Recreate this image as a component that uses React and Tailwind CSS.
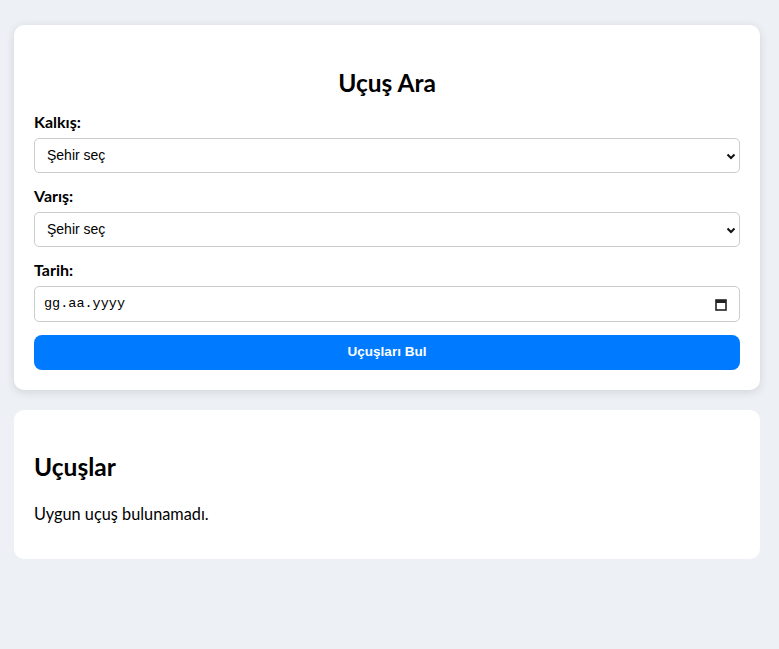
import { useState } from 'react';

const CITIES = ['İstanbul', 'Ankara', 'İzmir', 'Antalya'];

function Chevron() {
  return (
    <svg width="10" height="7" viewBox="0 0 10 7" className="absolute right-[4px] top-[15px] pointer-events-none">
      <path d="M1.5 1.5 L5 5 L8.5 1.5" fill="none" stroke="#111" strokeWidth="2" />
    </svg>
  );
}

function CitySelect({ value, onChange }) {
  return (
    <div className="relative mb-[13px]">
      <select
        value={value}
        onChange={(e) => onChange(e.target.value)}
        className="w-full h-[35px] appearance-none bg-white border border-[#cccccc] rounded-[5px] pl-[12px] text-[14px] text-black outline-none font-['Liberation_Sans',Arial,sans-serif]"
      >
        <option value="">Şehir seç</option>
        {CITIES.map((c) => (
          <option key={c} value={c}>{c}</option>
        ))}
      </select>
      <Chevron />
    </div>
  );
}

export default function App() {
  const [from, setFrom] = useState('');
  const [to, setTo] = useState('');

  return (
    <div className="min-h-[649px] bg-[#edf0f5] pt-[25px] pl-[14px] pr-[19px] font-['Lato','Open_Sans',sans-serif] text-black">
      {/* Arama kartı */}
      <div className="bg-white rounded-[10px] shadow-[0_2px_10px_rgba(0,0,0,0.12)] px-[20px] pt-[20px] pb-[20px]">
        <h2 className="text-center text-[24.5px] font-bold leading-[32px] mt-[22px] mb-[13px]">Uçuş Ara</h2>

        <label className="block text-[16px] font-bold leading-[20px] mb-[6px]">Kalkış:</label>
        <CitySelect value={from} onChange={setFrom} />

        <label className="block text-[16px] font-bold leading-[20px] mb-[6px]">Varış:</label>
        <CitySelect value={to} onChange={setTo} />

        <label className="block text-[16px] font-bold leading-[20px] mb-[6px]">Tarih:</label>
        <div className="flex items-center justify-between h-[36px] border border-[#cccccc] rounded-[5px] pl-[9px] pr-[12px] mb-[13px]">
          <span className="text-[13.5px] font-['Liberation_Mono',monospace] text-black">gg.aa.yyyy</span>
          <svg width="12" height="13" viewBox="0 0 12 13">
            <rect x="1" y="2" width="10" height="10" fill="none" stroke="#222" strokeWidth="1.6" />
            <rect x="1" y="2" width="10" height="3" fill="#222" />
          </svg>
        </div>

        <button className="w-full h-[35px] bg-[#007bff] text-white rounded-[8px] text-[13.5px] font-bold font-['Liberation_Sans',Arial,sans-serif]">
          Uçuşları Bul
        </button>
      </div>

      {/* Sonuç kartı */}
      <div className="mt-[20px] bg-white rounded-[10px] px-[20px] pt-[41px] pb-[35px]">
        <h2 className="text-[24.5px] font-bold leading-[32px] mb-[20px]">Uçuşlar</h2>
        <p className="text-[16.3px] leading-[21px]">Uygun uçuş bulunamadı.</p>
      </div>
    </div>
  );
}
